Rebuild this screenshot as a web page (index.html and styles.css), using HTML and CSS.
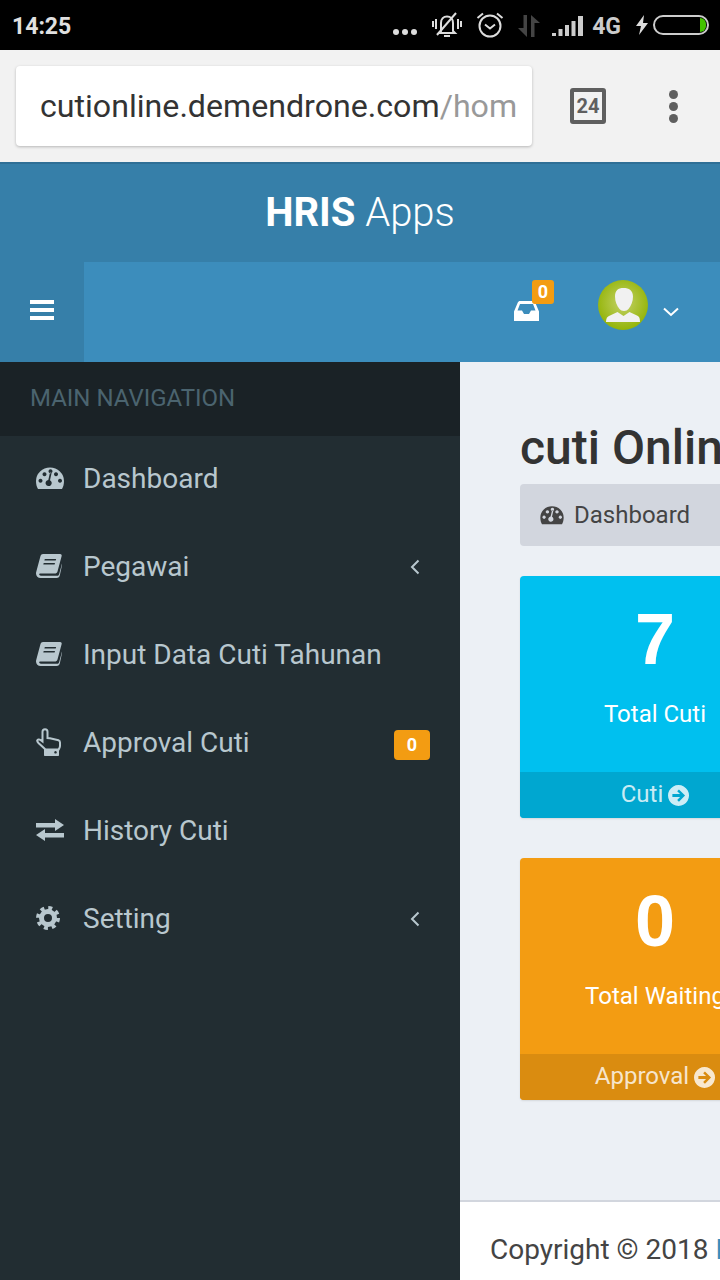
FILE: index.html
```html
<!DOCTYPE html>
<html>
<head>
  <title>HRIS Apps</title>
  <link rel="stylesheet" href="styles.css">
</head>
<body>
  <svg class="defs" width="0" height="0">
    <symbol id="i-gauge" viewBox="0 0 28 24">
      <path fill-rule="evenodd" d="M2 23C.7 21 0 18 0 15A14 13.5 0 0 1 28 15C28 18 27.3 21 26 23ZM4.5 12.7a2 2 0 1 0 .01 0ZM8.5 6.2a2 2 0 1 0 .01 0ZM14.500 3.200a2 2 0 1 0 .01 0ZM20 6.200a2 2 0 1 0 .01 0ZM24 12.700a2 2 0 1 0 .01 0ZM12.300 13.900 14 6.500l1.600.4-1.600 7.300a3.100 3.100 0 1 1-1.700-.3Z"/>
    </symbol>
    <symbol id="i-book" viewBox="0 0 26 24">
      <path fill-rule="evenodd" d="M7 0H24C25.500 0 26 1 25.600 2.200L21.500 17.500C21.100 19 20 19.500 18.700 19.500H4.500C3.300 19.500 2.800 20 3.400 21C3.800 21.500 4.500 21.700 5 21.700H21.500C22.300 21.700 22.900 21 23.100 20.200L26 9.500V11L23.900 21C23.500 22.800 22.500 24 20.500 24H4.500C2 24 0 22 0 19.500C0 18.800.2 18 .4 17.300L4.500 2C4.800 .8 5.800 0 7 0ZM8.800 5 8.400 6.500H19.700L20.100 5ZM7.700 9 7.300 10.500H18.600L19 9Z"/>
    </symbol>
    <symbol id="i-hand" viewBox="0 0 25 28">
      <path d="M9 1.200C10.600 1.200 11.500 2.500 11.500 3.800V10L14 10.300 22.500 12.300C23.400 12.600 24 13.300 24 14.500V18C24 19 23.600 20 22.700 21.400H9.500L3 15.500C1.500 14 .9 13.500 1.200 12.500 1.600 11.300 3.200 11 4.500 12L6.500 13.500V3.800C6.500 2.500 7.500 1.200 9 1.200Z" fill="none" stroke="currentColor" stroke-width="2"/>
      <path fill-rule="evenodd" d="M8 21H23V27C23 27.600 22.600 28 22 28H9C8.400 28 8 27.600 8 27ZM19.500 23a1.300 1.300 0 1 0 .01 0Z"/>
    </symbol>
    <symbol id="i-swap" viewBox="0 0 28 22">
      <path d="M0 4H19V0L28 6 19 12V8.500H0Z"/>
      <path d="M28 14V18.500H9V22L0 16 9 10V14Z"/>
    </symbol>
    <symbol id="i-gear" viewBox="0 0 24 24">
      <circle cx="12" cy="12" r="6.500" fill="none" stroke="currentColor" stroke-width="5"/>
      <circle cx="12" cy="12" r="10" fill="none" stroke="currentColor" stroke-width="4" stroke-dasharray="3.900 3.950"/>
    </symbol>
    <symbol id="i-arrow" viewBox="0 0 24 24">
      <path fill-rule="evenodd" d="M12 0a12 12 0 1 0 .01 0ZM12.500 5 19.500 12 12.500 19 10.500 17 13.800 13.700H5V10.300H13.800L10.500 7Z"/>
    </symbol>
    <radialGradient id="avatar-bg" cx="50%" cy="45%" r="55%">
      <stop offset="0" stop-color="#c4d26a"/>
      <stop offset="1" stop-color="#93b407"/>
    </radialGradient>
  </svg>

  <div class="statusbar">
    <span class="clock">14:25</span>
    <div class="status-icons">
      <svg class="st-dots" width="26" height="8" viewBox="0 0 26 8"><circle cx="4" cy="4" r="3"/><circle cx="13" cy="4" r="3"/><circle cx="22" cy="4" r="3"/></svg>
      <svg class="st-bell" width="30" height="26" viewBox="0 0 30 26"><path d="M9 19V11C9 7 11.500 4.500 15 4.500S21 7 21 11V19L23 21H7Z" fill="none" stroke="#ddd" stroke-width="2"/><path d="M12 24H18M1 9V15M4 7V17M26 7V17M29 9V15" stroke="#ddd" stroke-width="2" fill="none"/><path d="M5 23 24 1" stroke="#ddd" stroke-width="2"/></svg>
      <svg class="st-alarm" width="28" height="26" viewBox="0 0 28 26"><circle cx="14" cy="14" r="10.500" fill="none" stroke="#ddd" stroke-width="2"/><path d="M9 12.500 14 16.500 19 12.500M1.500 6 7 1.500M26.500 6 21 1.500" fill="none" stroke="#ddd" stroke-width="2"/></svg>
      <svg class="st-data" width="22" height="22" viewBox="0 0 22 22"><path d="M9 0V22L0 13H5.500V0Z" fill="#444"/><path d="M13 22V0L22 8H16.500V22Z" fill="#444"/></svg>
      <svg class="st-signal" width="32" height="20" viewBox="0 0 32 20"><path d="M0 20V17H4V20ZM6.500 20V13H10.500V20ZM13 20V9H17V20ZM19.500 20V5H23.500V20ZM26 20V0H31V20Z" fill="#ccc"/></svg>
      <span class="net">4G</span>
      <svg class="st-bolt" width="12" height="20" viewBox="0 0 12 20"><path d="M8 0 0 11H5L3 20 12 8H7Z" fill="#ddd"/></svg>
      <div class="battery"><span class="battery-level"></span></div>
    </div>
  </div>

  <div class="toolbar">
    <div class="urlbar"><span class="url">cutionline.demendrone.com<span class="url-path">/home</span></span></div>
    <div class="tabs-count">24</div>
    <div class="kebab"><span></span><span></span><span></span></div>
  </div>

  <header class="logo"><b>HRIS</b> Apps</header>

  <nav class="navbar">
    <div class="toggle"><span></span><span></span><span></span></div>
    <div class="nav-right">
      <div class="inbox">
        <svg width="25" height="20" viewBox="0 0 25 20"><path fill-rule="evenodd" d="M6 0H19C20 0 20.800 .6 21.200 1.500L25 10.500V20H0V10.500L3.800 1.500C4.200 .6 5 0 6 0ZM6 3 3.500 9.500H8L10 13H15L17 9.500H21.500L19 3Z" fill="#fff"/></svg>
        <span class="inbox-badge">0</span>
      </div>
      <svg class="avatar" width="50" height="50" viewBox="0 0 50 50">
        <circle cx="25" cy="25" r="25" fill="url(#avatar-bg)"/>
        <path d="M25.500 8C31 8 35 10.500 35 16.500C35 21.500 33 26 30.500 29C28.500 31.500 23.500 31.500 21.500 29C19 26 17 21.500 17 16.500C17 10.500 20 8 25.500 8Z" fill="#f1f1f1"/>
        <path d="M8 42C8 38.500 9 36.500 12 35.500L19.500 32 25.500 36 31.500 32 39 35.500C41.500 36.500 42 38.500 42 42Z" fill="#f1f1f1"/>
      </svg>
      <svg class="user-caret" width="16" height="10" viewBox="0 0 16 10"><path d="M1 1.500 8 8 15 1.500" fill="none" stroke="#fff" stroke-width="2"/></svg>
    </div>
  </nav>

  <div class="wrapper">
    <aside class="sidebar">
      <div class="sidebar-header">MAIN NAVIGATION</div>
      <ul class="menu">
        <li><svg class="menu-icon" width="28" height="24"><use href="#i-gauge"/></svg><span>Dashboard</span></li>
        <li><svg class="menu-icon" width="26" height="24"><use href="#i-book"/></svg><span>Pegawai</span><svg class="menu-caret" width="10" height="16" viewBox="0 0 10 16"><path d="M8.500 1.500 2 8 8.500 14.500" fill="none" stroke="currentColor" stroke-width="2"/></svg></li>
        <li><svg class="menu-icon" width="26" height="24"><use href="#i-book"/></svg><span>Input Data Cuti Tahunan</span></li>
        <li><svg class="menu-icon" width="25" height="28"><use href="#i-hand"/></svg><span>Approval Cuti</span><em class="menu-badge">0</em></li>
        <li><svg class="menu-icon" width="28" height="22"><use href="#i-swap"/></svg><span>History Cuti</span></li>
        <li><svg class="menu-icon" width="24" height="24"><use href="#i-gear"/></svg><span>Setting</span><svg class="menu-caret" width="10" height="16" viewBox="0 0 10 16"><path d="M8.500 1.500 2 8 8.500 14.500" fill="none" stroke="currentColor" stroke-width="2"/></svg></li>
      </ul>
    </aside>

    <main class="main">
      <section class="content">
        <h1>cuti Online</h1>
        <div class="breadcrumb"><svg width="24" height="20"><use href="#i-gauge"/></svg>Dashboard</div>

        <div class="box box-blue">
          <div class="box-inner">
            <h3>7</h3>
            <p>Total Cuti</p>
          </div>
          <div class="box-footer">Cuti <svg width="21" height="21"><use href="#i-arrow"/></svg></div>
        </div>

        <div class="box box-orange">
          <div class="box-inner">
            <h3>0</h3>
            <p>Total Waiting</p>
          </div>
          <div class="box-footer">Approval <svg width="21" height="21"><use href="#i-arrow"/></svg></div>
        </div>
      </section>
      <footer class="footer">Copyright © 2018 <a>HRIS</a></footer>
    </main>
  </div>
</body>
</html>
```

FILE: styles.css
```css
* { box-sizing: border-box; }
html, body {
  margin: 0;
  height: 1280px;
  overflow: hidden;
}
body {
  display: flex;
  flex-direction: column;
  background: #ecf0f5;
  color: #333;
  font-family: Roboto, 'Liberation Sans', sans-serif;
}
.defs { display: block; height: 0; }
symbol { fill: currentColor; }

/* phone status bar */
.statusbar {
  height: 50px;
  background: #000;
  display: flex;
  align-items: center;
  justify-content: space-between;
  padding: 0 11px 0 12px;
}
.clock {
  color: #e0e0e0;
  font-size: 23px;
  font-weight: 700;
  margin-top: 2px;
}
.status-icons {
  display: flex;
  align-items: center;
  fill: #ddd;
}
.st-dots { margin-top: 14px; }
.st-bell { margin-left: 14px; }
.st-alarm { margin-left: 14px; }
.st-data { margin: 2px 0 0 14px; }
.st-signal { margin: 2px 0 0 12px; }
.net {
  color: #ccc;
  font-size: 23px;
  font-weight: 700;
  margin: 2px 0 0 8px;
}
.st-bolt { margin: 0 0 0 15px; }
.battery {
  width: 56px;
  height: 20px;
  margin-left: 5px;
  border: 2px solid #ccc;
  border-radius: 10px;
  position: relative;
  overflow: hidden;
}
.battery-level {
  position: absolute;
  right: 1px;
  top: 1px;
  bottom: 1px;
  width: 6px;
  background: #44c400;
  border-radius: 0 6px 6px 0;
}

/* browser toolbar */
.toolbar {
  height: 112px;
  background: #f2f2f2;
  display: flex;
  align-items: center;
  padding-left: 16px;
}
.urlbar {
  width: 516px;
  height: 80px;
  background: #fff;
  border-radius: 4px;
  box-shadow: 0 1px 3px rgba(0,0,0,.25);
  padding: 0 16px 0 24px;
  display: flex;
  align-items: center;
  overflow: hidden;
}
.url {
  display: block;
  font-size: 32.15px;
  color: #333;
  white-space: nowrap;
  overflow: hidden;
  width: 100%;
}
.url-path { color: #999; }
.tabs-count {
  width: 36px;
  height: 36px;
  margin-left: 38px;
  border: 4px solid #5f5f5f;
  border-radius: 3px;
  color: #5f5f5f;
  font-size: 20px;
  font-weight: 700;
  display: flex;
  align-items: center;
  justify-content: center;
}
.kebab {
  margin-left: 63px;
  display: flex;
  flex-direction: column;
  gap: 3px;
}
.kebab span {
  width: 9px;
  height: 9px;
  border-radius: 50%;
  background: #5f5f5f;
}

/* app header */
.logo {
  height: 100px;
  background: #367fa9;
  border-top: 2px solid #2f6f96;
  padding-bottom: 2px;
  color: #fff;
  font-size: 40px;
  font-weight: 300;
  display: flex;
  align-items: center;
  justify-content: center;
  white-space: pre;
}
.logo b { font-weight: 700; }
.navbar {
  height: 100px;
  background: #3c8dbc;
  display: flex;
}
.toggle {
  width: 84px;
  background: #367fa9;
  display: flex;
  flex-direction: column;
  justify-content: center;
  gap: 4px;
  padding: 0 0 4px 30px;
}
.toggle span {
  width: 24px;
  height: 4px;
  background: #fff;
}
.nav-right {
  flex: 1;
  display: flex;
  align-items: center;
  justify-content: flex-end;
  padding: 0 41px 4px 0;
}
.inbox {
  position: relative;
  height: 20px;
  margin-top: 1px;
}
.inbox-badge {
  position: absolute;
  left: 18px;
  top: -21px;
  width: 22px;
  height: 24px;
  background: #f39c12;
  border-radius: 3px;
  color: #fff;
  font-size: 18px;
  font-weight: 700;
  text-align: center;
  line-height: 24px;
}
.avatar { margin-left: 59px; margin-top: -10px; }
.user-caret { margin: 4px 0 0 15px; }

/* layout */
.wrapper {
  flex: 1;
  display: flex;
  min-height: 0;
}
.sidebar {
  width: 460px;
  flex: none;
  background: #222d32;
}
.sidebar-header {
  height: 74px;
  background: #1a2226;
  color: #4b646f;
  font-size: 24px;
  padding-left: 30px;
  line-height: 72px;
}
.menu {
  list-style: none;
  margin: -2px 0 0;
  padding: 0;
}
.menu li {
  height: 88px;
  display: flex;
  align-items: center;
  color: #b8c7ce;
  font-size: 28px;
  position: relative;
  padding-left: 36px;
}
.menu-icon {
  position: absolute;
  left: 36px;
  top: 50%;
  transform: translateY(-50%);
}
.menu li span { margin-left: 47px; }
.menu-caret { margin: 2px 40px 0 auto; }
.menu-badge {
  margin: 6px 30px 0 auto;
  width: 36px;
  height: 30px;
  background: #f39c12;
  border-radius: 4px;
  color: #fff;
  font-size: 18px;
  font-style: normal;
  font-weight: 700;
  text-align: center;
  line-height: 30px;
}

/* content */
.main {
  flex: 1;
  min-width: 0;
  display: flex;
  flex-direction: column;
  overflow: hidden;
}
.content {
  flex: 1;
  padding: 57px 0 0 60px;
  width: 360px;
}
h1 {
  margin: 0;
  font-size: 48px;
  font-weight: 500;
  line-height: 58px;
  white-space: nowrap;
}
.breadcrumb {
  width: 400px;
  height: 62px;
  margin-top: 7px;
  background: #d2d6de;
  border-radius: 4px;
  color: #444;
  font-size: 24px;
  display: flex;
  align-items: center;
  gap: 10px;
  padding-left: 20px;
}
.box {
  width: 270px;
  height: 242px;
  margin-top: 30px;
  border-radius: 4px;
  box-shadow: 0 1px 2px rgba(0,0,0,.1);
  color: #fff;
  display: flex;
  flex-direction: column;
  overflow: hidden;
}
.box + .box { margin-top: 40px; }
.box-inner {
  height: 196px;
  text-align: center;
  padding-top: 21px;
}
.box h3 {
  margin: 0;
  font-family: 'Liberation Sans', sans-serif;
  font-size: 72px;
  font-weight: 700;
  line-height: 84px;
}
.box p {
  margin: 18px 0 0;
  font-size: 24px;
  line-height: 30px;
  white-space: nowrap;
}
.box-footer {
  height: 46px;
  padding-bottom: 2px;
  color: rgba(255,255,255,.8);
  font-size: 24px;
  display: flex;
  align-items: center;
  justify-content: center;
  gap: 5px;
}
.box-footer svg { fill: rgba(255,255,255,.8); margin-top: 2px; }
.box-blue { background: #00c0ef; }
.box-blue .box-footer { background: #00a7d0; }
.box-orange { background: #f39c12; }
.box-orange .box-footer { background: #da8c10; }

.footer {
  height: 80px;
  flex: none;
  background: #fff;
  border-top: 2px solid #d2d6de;
  color: #444;
  font-size: 28px;
  padding: 30px 0 0 30px;
  line-height: 36px;
  white-space: nowrap;
}
.footer a { color: #3c8dbc; }
```
